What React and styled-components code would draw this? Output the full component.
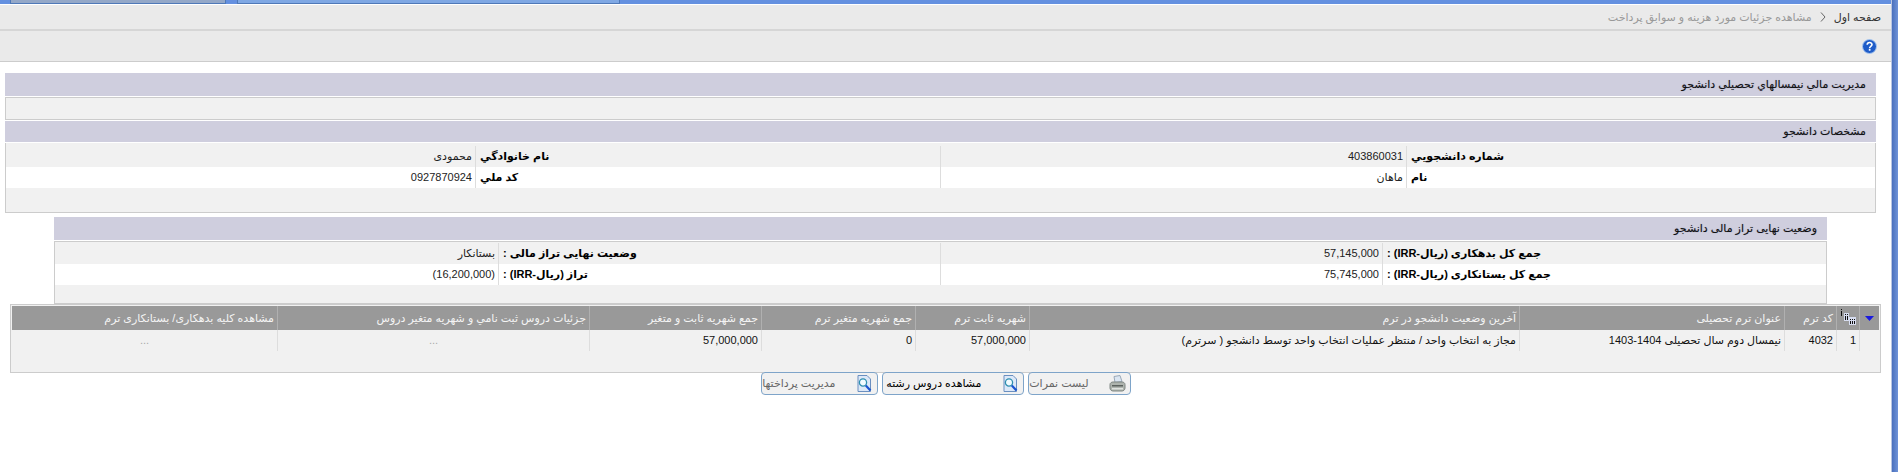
import React from "react";
import styled, { createGlobalStyle } from "styled-components";

const Global = createGlobalStyle`
  html, body {
    margin: 0;
    padding: 0;
    background: #fff;
    overflow: hidden;
  }
  body {
    font-family: "Liberation Sans", "DejaVu Sans", sans-serif;
    font-size: 11px;
    color: #111;
  }
`;

const Page = styled.div`
  display: flex;
  width: 1898px;
  height: 472px;
  overflow: hidden;
`;

const Main = styled.div`
  width: 1891px;
  flex: none;
  display: flex;
  flex-direction: column;
`;

const Strip = styled.div`
  flex: 1;
  background: linear-gradient(90deg, #b9c6e2 0 1px, #4a70bd 1px, #6f93d8);
`;

const TabBar = styled.div`
  height: 4px;
  display: flex;
  gap: 11px;
  padding-left: 10px;
  background: #6490e0;
  border-bottom: 1px solid #fff;
`;

const Tab = styled.div`
  width: ${(p) => p.$w}px;
  background: ${(p) => p.$bg};
  border: 1px solid #4f79b8;
  border-top: 0;
  box-sizing: border-box;
`;

const Breadcrumb = styled.div`
  height: 24px;
  display: flex;
  align-items: center;
  gap: 8px;
  padding-right: 10px;
  background: #eaeaea;
  border-bottom: 2px solid #d6d6d6;
`;

const Crumb = styled.span`
  color: ${(p) => (p.$muted ? "#999" : "#333")};
`;

const Toolbar = styled.div`
  height: 30px;
  display: flex;
  align-items: center;
  padding-right: 14px;
  background: #eaeaea;
  border-bottom: 1px solid #ccc;
`;

const Content = styled.div`
  display: flex;
  flex-direction: column;
  padding-top: 11px;
`;

const Section = styled.div`
  margin: ${(p) => p.$top || 0}px ${(p) => p.$right}px 0 ${(p) => p.$left}px;
`;

const Header = styled.div`
  height: ${(p) => p.$h}px;
  line-height: ${(p) => p.$h}px;
  padding-right: 10px;
  background: #cfcede;
  text-shadow: 0 0 1px #8a8aa8;
`;

const EmptyBox = styled.div`
  height: 21px;
  margin: 1px 0;
  background: #f1f1f1;
  border: 1px solid #ccc;
`;

const InfoBox = styled.div`
  height: ${(p) => p.$h}px;
  box-sizing: border-box;
  margin-top: 1px;
  padding-top: ${(p) => p.$pad}px;
  background: #f1f1f1;
  border: 1px solid #ccc;
  border-top-width: ${(p) => (p.$flat ? 0 : 1)}px;
`;

const InfoRow = styled.div`
  display: grid;
  grid-template-columns: ${(p) => p.$cols};
  height: 21px;
  line-height: 21px;
  background: ${(p) => (p.$alt ? "#fff" : "transparent")};
`;

const Label = styled.div`
  padding-left: 4px;
  text-align: left;
  font-weight: 700;
  color: #000;
  border-left: 1px solid #ddd;
`;

const Value = styled.div`
  padding-right: 3px;
  color: #222;
  border-left: ${(p) => (p.$last ? "0" : "1px solid #ddd")};
`;

const GridBox = styled.div`
  height: 69px;
  box-sizing: border-box;
  margin: 0 10px;
  padding: 1px;
  background: #f1f1f1;
  border: 1px solid #ccc;
`;

const GridColumns = "20px 23px 52px 265px 490px 114px 154px 172px 312px 1fr";

const GridHead = styled.div`
  display: grid;
  grid-template-columns: ${GridColumns};
  height: 24px;
  background: #999;
`;

const HeadCell = styled.div`
  display: flex;
  align-items: center;
  justify-content: ${(p) => (p.$center ? "center" : "flex-start")};
  padding-right: ${(p) => (p.$center ? 0 : 3)}px;
  color: #f4f4f4;
  white-space: nowrap;
  border-left: ${(p) => (p.$last ? "0" : "1px solid #b0b0b0")};
`;

const GridRow = styled.div`
  display: grid;
  grid-template-columns: ${GridColumns};
  height: 21px;
  line-height: 21px;
`;

const DataCell = styled.div`
  padding-right: ${(p) => (p.$dots ? 0 : 3)}px;
  text-align: ${(p) => (p.$dots ? "center" : "start")};
  color: ${(p) => (p.$dots ? "#aaa" : "#111")};
  white-space: nowrap;
  border-left: ${(p) => (p.$last ? "0" : "1px solid #ddd")};
`;

const ButtonRow = styled.div`
  display: flex;
  justify-content: center;
  gap: 4px;
  margin-top: -1px;
`;

const Button = styled.div`
  width: ${(p) => p.$w}px;
  height: 23px;
  box-sizing: border-box;
  display: flex;
  align-items: center;
  padding-right: 3px;
  gap: 20px;
  background: #f1f1f1;
  border: 1px solid #7ea4c9;
  border-radius: 4px;
  color: ${(p) => (p.$dark ? "#000" : "#666")};
  white-space: nowrap;
`;

const IconSlot = styled.span`
  width: 18px;
  flex: none;
  display: flex;
  justify-content: center;
`;

const SortArrow = () => (
  <svg width="9" height="5" viewBox="0 0 9 5">
    <path d="M0 0h9L4.500 5z" fill="#1a1ae0" />
  </svg>
);

// staircase of i / ii / iii, sits a little high in its cell
const ColumnsIcon = () => (
  <svg width="16" height="16" viewBox="0 0 16 16" style={{ marginTop: -2 }}>
    <rect x="4" y="4" width="5" height="8" fill="#d6dcef" />
    <rect x="9" y="8" width="7" height="8" fill="#d6dcef" />
    <path
      d="M1.500 0v1M1.500 2v5M5.500 5v1M5.500 7v4M7.500 5v1M7.500 7v4M10.500 10v1M10.500 12v3M12.500 10v1M12.500 12v3M14.500 10v1M14.500 12v3"
      stroke="#111"
      fill="none"
    />
  </svg>
);

const HelpIcon = () => (
  <svg width="15" height="15" viewBox="0 0 15 15">
    <circle cx="7.500" cy="7.500" r="7" fill="#1f5cc8" stroke="#a9c8f0" />
    <path d="M5.200 5.800c0-3 4.800-3 4.800-.2 0 1.900-2.400 1.800-2.400 3.600" fill="none" stroke="#fff" strokeWidth="1.600" />
    <rect x="6.800" y="10" width="1.700" height="1.700" fill="#fff" />
  </svg>
);

const ChevronIcon = () => (
  <svg width="6" height="10" viewBox="0 0 6 10">
    <path d="M1 .5 5 5 1 9.500" fill="none" stroke="#666" />
  </svg>
);

const PrintIcon = () => (
  <svg width="17" height="17" viewBox="0 0 17 17">
    <path d="M5 1.500 11 .5l2 6-7 1z" fill="#dbe6f2" stroke="#9aa8b8" />
    <path d="M1 9.500C1 8 2.500 7 4 7h9c1.600 0 3 1 3 2.500v3.500c0 1.800-1.500 3-3 3H4c-1.500 0-3-1.200-3-3z" fill="#aeb4ae" stroke="#7f8682" />
    <path d="M3 10h11v1.500H3z" fill="#5c625e" />
    <path d="M3 13h11v1.500H3z" fill="#dfe2df" />
  </svg>
);

const SearchDocIcon = () => (
  <svg width="15" height="18" viewBox="0 0 15 18">
    <path d="M1 .5h9l3.500 3.500v12.500H1z" fill="#dce8f8" stroke="#6a8fc0" />
    <circle cx="6" cy="7.500" r="3.600" fill="#f2fbff" stroke="#2f8fb0" strokeWidth="1.300" />
    <path d="m8.800 10.500 4.700 5" stroke="#1a54d0" strokeWidth="2.200" />
  </svg>
);

const studentCols = "469px 466px 465px 1fr";
const balanceCols = "444px 442px 442px 1fr";

const studentRows = [
  ["شماره دانشجويي", "403860031", "نام خانوادگي", "محمودی"],
  ["نام", "ماهان", "کد ملي", "0927870924"],
];

const balanceRows = [
  ["جمع کل بدهکاری (ریال-IRR) :", "57,145,000", "وضعیت نهایی تراز مالی :", "بستانکار"],
  ["جمع کل بستانکاری (ریال-IRR) :", "75,745,000", "تراز (ریال-IRR) :", "(16,200,000)"],
];

const headTitles = [
  "کد ترم",
  "عنوان ترم تحصیلی",
  "آخرین وضعیت دانشجو در ترم",
  "شهریه ثابت ترم",
  "جمع شهریه متغیر ترم",
  "جمع شهریه ثابت و متغیر",
  "جزئیات دروس ثبت نامي و شهریه متغیر دروس",
  "مشاهده کلیه بدهکاری/ بستانکاری ترم",
];

const InfoRows = ({ rows, cols }) =>
  rows.map((r, i) => (
    <InfoRow key={i} $alt={i === 1} $cols={cols}>
      <Label>{r[0]}</Label>
      <Value>{r[1]}</Value>
      <Label>{r[2]}</Label>
      <Value $last>{r[3]}</Value>
    </InfoRow>
  ));

export default function App() {
  return (
    <Page>
      <Global />
      <Main dir="rtl">
        <TabBar dir="ltr">
          <Tab $w={216} $bg="#94a8c8" />
          <Tab $w={383} $bg="#7fa8e4" />
        </TabBar>
        <Breadcrumb>
          <Crumb>صفحه اول</Crumb>
          <ChevronIcon />
          <Crumb $muted>مشاهده جزئیات مورد هزینه و سوابق پرداخت</Crumb>
        </Breadcrumb>
        <Toolbar>
          <HelpIcon />
        </Toolbar>
        <Content>
          <Section $right={15} $left={5}>
            <Header $h={23}>مديريت مالي نيمسالهاي تحصيلي دانشجو</Header>
            <EmptyBox />
            <Header $h={21}>مشخصات دانشجو</Header>
            <InfoBox $h={70} $pad={3} $flat>
              <InfoRows rows={studentRows} cols={studentCols} />
            </InfoBox>
          </Section>
          <Section $top={4} $right={64} $left={54}>
            <Header $h={23}>وضعیت نهایی تراز مالی دانشجو</Header>
            <InfoBox $h={63} $pad={1}>
              <InfoRows rows={balanceRows} cols={balanceCols} />
            </InfoBox>
          </Section>
          <GridBox>
            <GridHead>
              <HeadCell $center>
                <SortArrow />
              </HeadCell>
              <HeadCell $center>
                <ColumnsIcon />
              </HeadCell>
              {headTitles.map((t, i) => (
                <HeadCell key={t} $last={i === headTitles.length - 1}>
                  {t}
                </HeadCell>
              ))}
            </GridHead>
            <GridRow>
              <DataCell />
              <DataCell>1</DataCell>
              <DataCell>4032</DataCell>
              <DataCell>نیمسال دوم سال تحصیلی 1404-1403</DataCell>
              <DataCell>مجاز به انتخاب واحد / منتظر عملیات انتخاب واحد توسط دانشجو ( سرترم)</DataCell>
              <DataCell>57,000,000</DataCell>
              <DataCell>0</DataCell>
              <DataCell>57,000,000</DataCell>
              <DataCell $dots>...</DataCell>
              <DataCell $dots $last>...</DataCell>
            </GridRow>
          </GridBox>
          <ButtonRow>
            <Button $w={103}>
              <IconSlot>
                <PrintIcon />
              </IconSlot>
              لیست نمرات
            </Button>
            <Button $w={142} $dark>
              <IconSlot>
                <SearchDocIcon />
              </IconSlot>
              مشاهده دروس رشته
            </Button>
            <Button $w={117}>
              <IconSlot>
                <SearchDocIcon />
              </IconSlot>
              مدیریت پرداختها
            </Button>
          </ButtonRow>
        </Content>
      </Main>
      <Strip />
    </Page>
  );
}
